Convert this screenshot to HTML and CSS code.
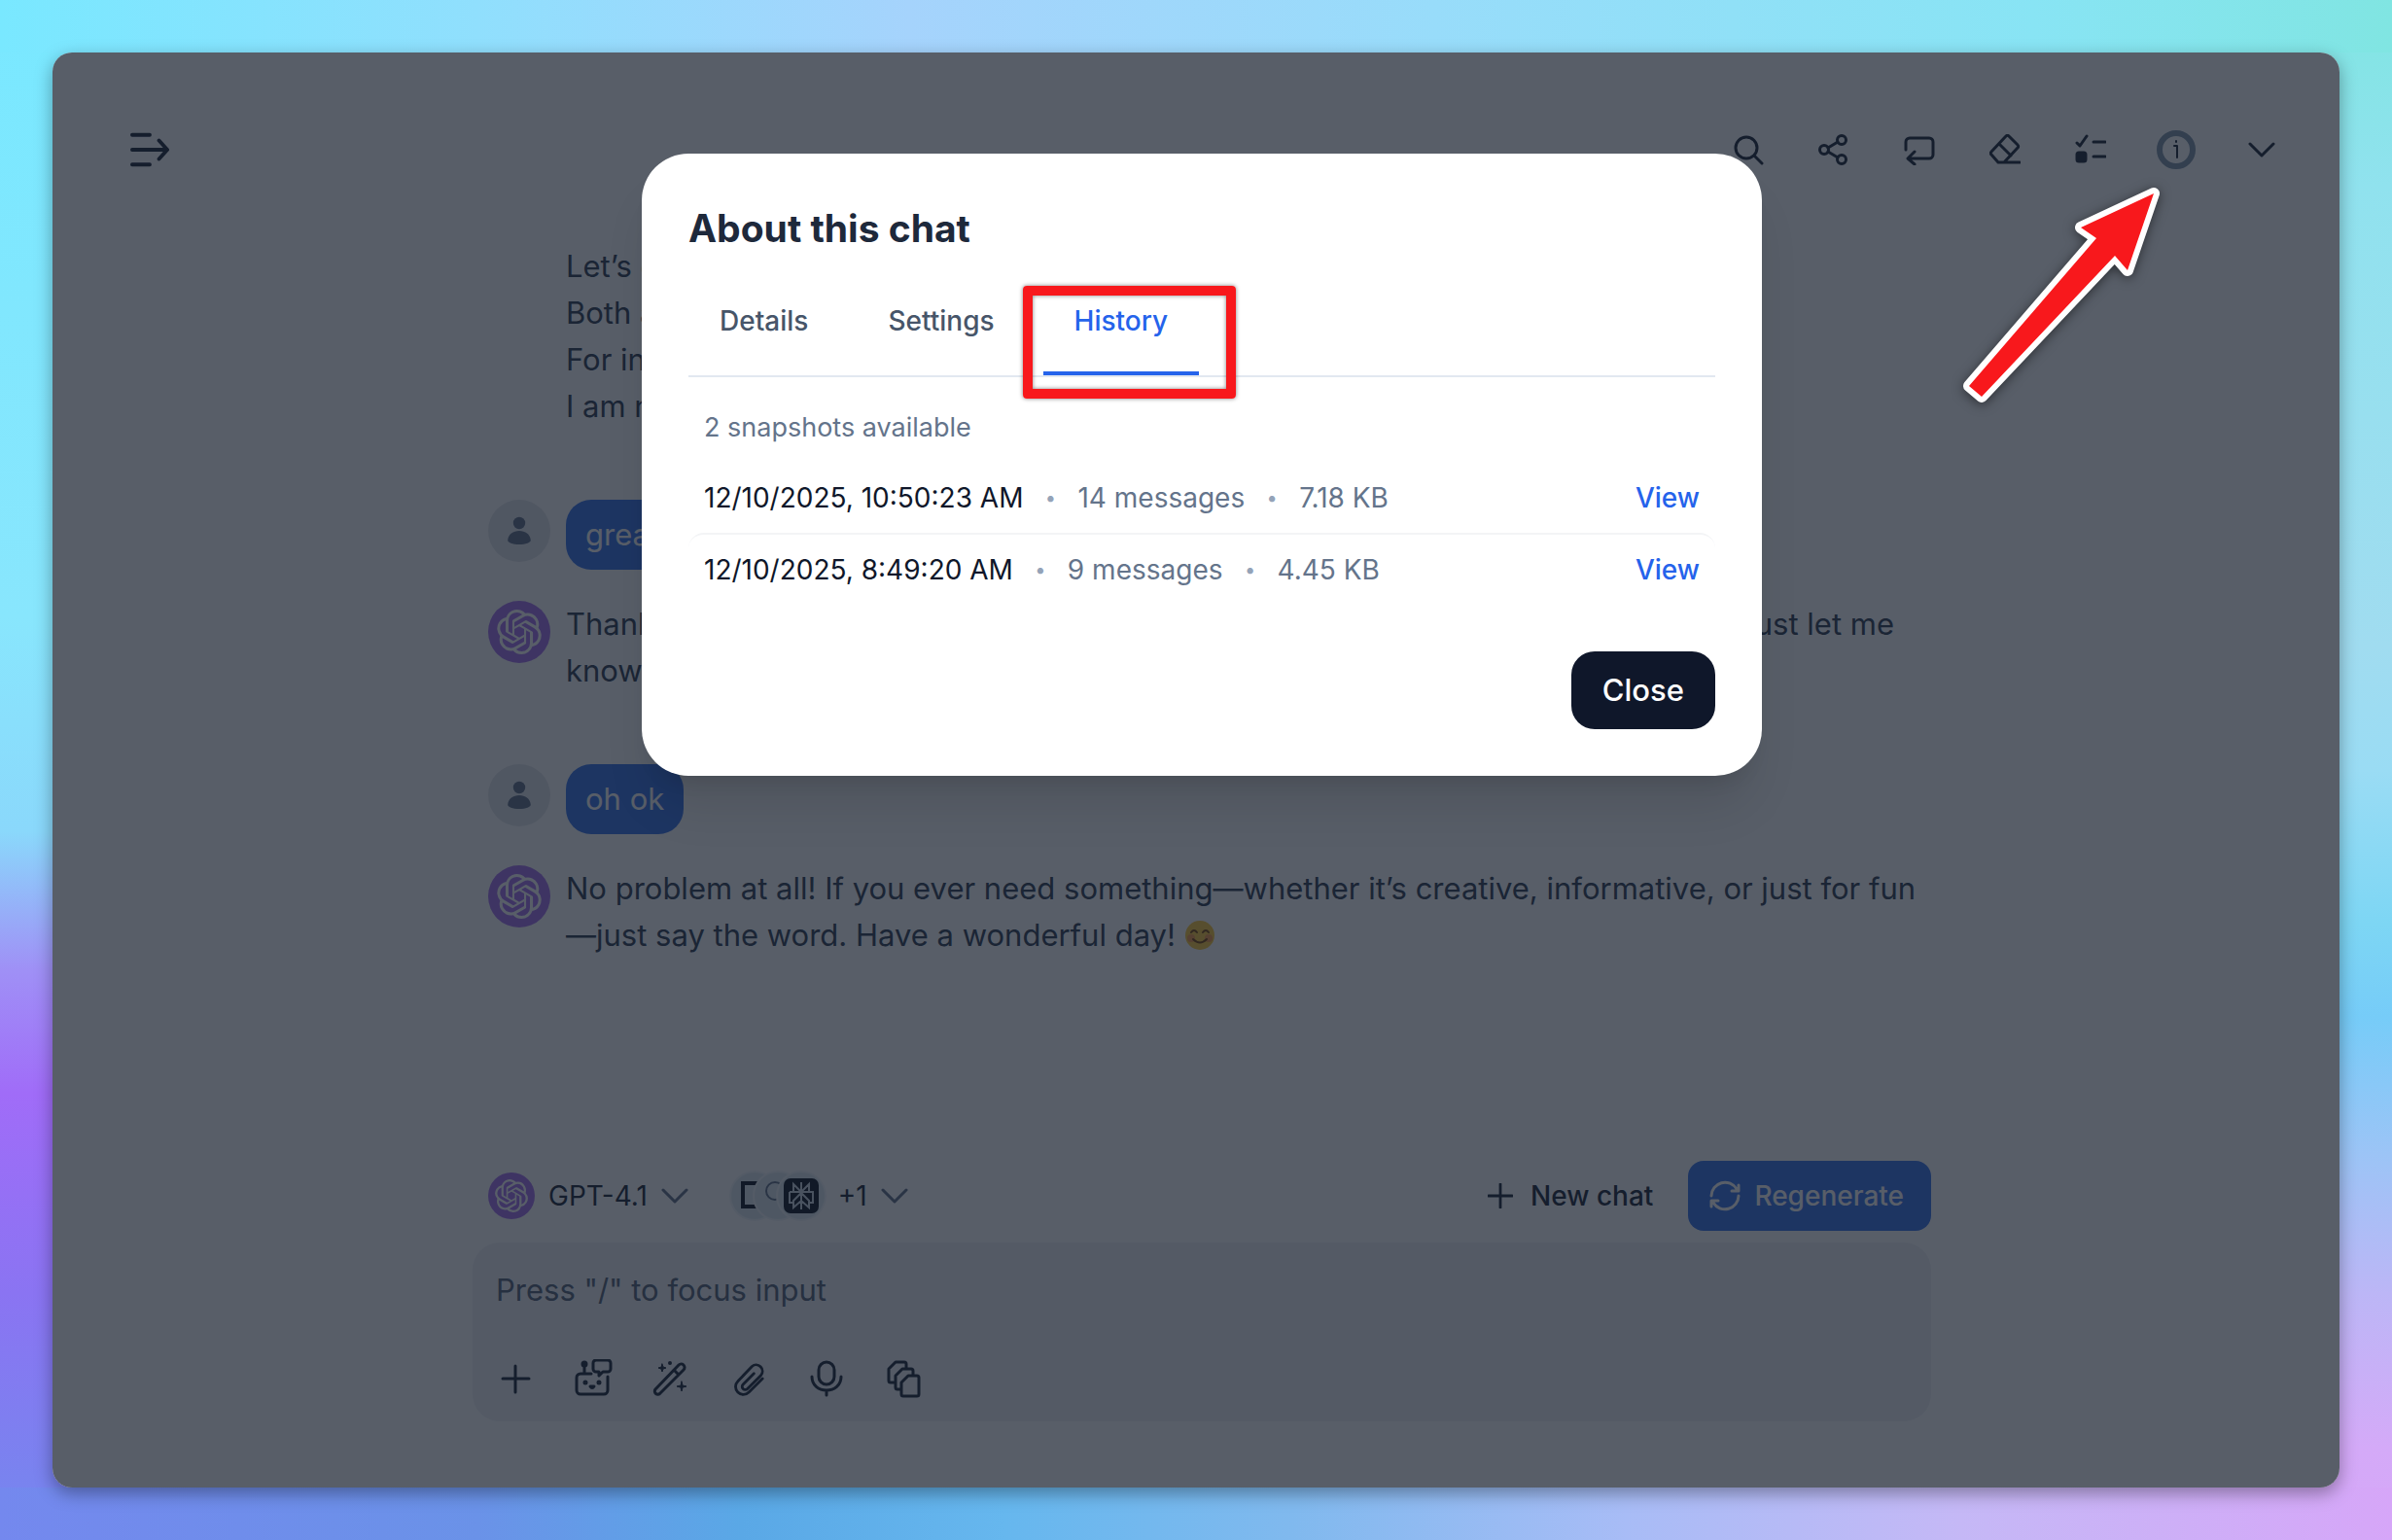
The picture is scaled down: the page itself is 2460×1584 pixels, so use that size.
FILE: index.html
```
<!DOCTYPE html>
<html lang="en">

<head>
    <meta charset="UTF-8">
    <meta name="viewport" content="width=device-width, initial-scale=1.0">
    <link rel="stylesheet" href="styles.css">
    <title>About this chat</title>
</head>

<body>

    <!-- shared icon shapes -->
    <svg class="sprite" aria-hidden="true">
        <symbol id="openai" viewBox="0 0 24 24">
            <path d="M22.2819 9.8211a5.9847 5.9847 0 0 0-.5157-4.9108 6.0462 6.0462 0 0 0-6.5098-2.9A6.0651 6.0651 0 0 0 4.9807 4.1818a5.9847 5.9847 0 0 0-3.9977 2.9 6.0462 6.0462 0 0 0 .7427 7.0966 5.98 5.98 0 0 0 .511 4.9107 6.051 6.051 0 0 0 6.5146 2.9001A5.9847 5.9847 0 0 0 13.2599 24a6.0557 6.0557 0 0 0 5.7718-4.2058 5.9894 5.9894 0 0 0 3.9977-2.9001 6.0557 6.0557 0 0 0-.7475-7.0729zm-9.022 12.6081a4.4755 4.4755 0 0 1-2.8764-1.0408l.1419-.0804 4.7783-2.7582a.7948.7948 0 0 0 .3927-.6813v-6.7369l2.02 1.1686a.071.071 0 0 1 .038.052v5.5826a4.504 4.504 0 0 1-4.4945 4.4944zm-9.6607-4.1254a4.4708 4.4708 0 0 1-.5346-3.0137l.142.0852 4.783 2.7582a.7712.7712 0 0 0 .7806 0l5.8428-3.3685v2.3324a.0804.0804 0 0 1-.0332.0615L9.74 19.9502a4.4992 4.4992 0 0 1-6.1408-1.6464zM2.3408 7.8956a4.485 4.485 0 0 1 2.3655-1.9728V11.6a.7664.7664 0 0 0 .3879.6765l5.8144 3.3543-2.0201 1.1685a.0757.0757 0 0 1-.071 0l-4.8303-2.7865A4.504 4.504 0 0 1 2.3408 7.872zm16.5963 3.8558L13.1038 8.364 15.1192 7.2a.0757.0757 0 0 1 .071 0l4.8303 2.7913a4.4944 4.4944 0 0 1-.6765 8.1042v-5.6772a.79.79 0 0 0-.407-.667zm2.0107-3.0231l-.142-.0852-4.7735-2.7818a.7759.7759 0 0 0-.7854 0L9.409 9.2297V6.8974a.0662.0662 0 0 1 .0284-.0615l4.8303-2.7866a4.4992 4.4992 0 0 1 6.6802 4.66zM8.3065 12.863l-2.02-1.1638a.0804.0804 0 0 1-.038-.0567V6.0742a4.4992 4.4992 0 0 1 7.3757-3.4537l-.142.0805L8.704 5.459a.7948.7948 0 0 0-.3927.6813zm1.0976-2.3654l2.602-1.4998 2.6069 1.4998v2.9994l-2.5974 1.4997-2.6067-1.4997Z"/>
        </symbol>
        <symbol id="user" viewBox="0 0 32 32">
            <circle cx="16" cy="8" r="6.2"/>
            <path d="M4.200 25.500c.6-6 5.600-9.500 11.800-9.500s11.200 3.500 11.800 9.500c.2 2.500-5 4.500-11.800 4.500s-12-2-11.800-4.500z"/>
        </symbol>
        <symbol id="chevron" viewBox="0 0 28 16">
            <path d="M2 2l12 12L26 2"/>
        </symbol>
        <symbol id="plus" viewBox="0 0 28 28">
            <path d="M14 1v26M1 14h26"/>
        </symbol>
    </svg>

    <div class="window">
        <header class="topbar">
            <button class="icon-btn menu-btn" aria-label="Show sidebar">
                <svg class="icon menu" viewBox="0 0 42 36"><path d="M2 2h19M2 18h37M2 34h19M31 8l9 10-9 10"/></svg>
            </button>
            <nav class="tools">
                <button class="icon-btn" aria-label="Search">
                    <svg class="icon" viewBox="0 0 32 32"><circle cx="14" cy="14" r="11"/><path d="M22 22l8 8"/></svg>
                </button>
                <button class="icon-btn" aria-label="Share">
                    <svg class="icon" viewBox="0 0 32 32"><circle cx="6" cy="16" r="4.500"/><circle cx="24" cy="6" r="4.500"/><circle cx="24" cy="26" r="4.500"/><path d="M10 14l10-6M10 18l10 6"/></svg>
                </button>
                <button class="icon-btn" aria-label="Resend">
                    <svg class="icon" viewBox="0 0 32 32"><path d="M2 16V8a4 4 0 0 1 4-4h20a4 4 0 0 1 4 4v13a4 4 0 0 1-4 4H5M11 18l-7 7 7 6"/></svg>
                </button>
                <button class="icon-btn" aria-label="Clear">
                    <svg class="icon" viewBox="0 0 32 32"><path d="M9 29l-7-8a2 2 0 0 1 0-3L17 2a2 2 0 0 1 3 0l9 9a2 2 0 0 1 0 3L15 29zM10 10l12 12M9 29h22"/></svg>
                </button>
                <button class="icon-btn" aria-label="Select messages">
                    <svg class="icon" viewBox="0 0 32 32"><path d="M2 9l3 3 7-10M19 8h12M19 23h12"/><rect class="fill" x="2" y="19" width="9" height="9" rx="2"/></svg>
                </button>
                <button class="icon-btn" aria-label="Chat info">
                    <svg class="icon info" viewBox="0 0 40 40"><circle class="ring" cx="20" cy="20" r="17"/><path d="M18 16h3v12M20 11v1"/></svg>
                </button>
                <button class="icon-btn" aria-label="More">
                    <svg class="icon chev"><use href="#chevron"/></svg>
                </button>
            </nav>
        </header>

        <main class="chat">
            <div class="message continued">
                <p class="text">Let’s go<br>Both are<br>For info<br>I am not</p>
            </div>
            <div class="message user">
                <span class="avatar"><svg><use href="#user"/></svg></span>
                <p class="bubble">great</p>
            </div>
            <div class="message bot">
                <span class="avatar ai"><svg><use href="#openai"/></svg></span>
                <p class="text"><span class="split"><span>Thank you!</span><span>just let me</span></span>know—</p>
            </div>
            <div class="message user">
                <span class="avatar"><svg><use href="#user"/></svg></span>
                <p class="bubble">oh ok</p>
            </div>
            <div class="message bot">
                <span class="avatar ai"><svg><use href="#openai"/></svg></span>
                <p class="text">No problem at all! If you ever need something—whether it’s creative, informative, or just for fun<br>—just say the word. Have a wonderful day!
                    <svg class="smile" viewBox="0 0 32 32" role="img" aria-label="Smiling face">
                        <circle class="face" cx="16" cy="16" r="15"/>
                        <circle class="cheek" cx="7" cy="19" r="4"/><circle class="cheek" cx="25" cy="19" r="4"/>
                        <path d="M7 13q3-4 6 0M19 13q3-4 6 0M9 20q7 7 14 0"/>
                    </svg></p>
            </div>
        </main>

        <footer class="composer">
            <div class="actions">
                <button class="model">
                    <span class="avatar ai small"><svg><use href="#openai"/></svg></span>
                    GPT-4.1
                    <svg class="icon chev light"><use href="#chevron"/></svg>
                </button>
                <button class="plugins">
                    <span class="stack">
                        <span class="chip"><svg viewBox="0 0 48 48"><path class="frame" d="M12 11h24v24H12z"/></svg></span>
                        <span class="chip"><svg viewBox="0 0 48 48"><circle class="loop" cx="21" cy="19" r="9"/></svg></span>
                        <span class="chip"><svg viewBox="0 0 48 48"><rect class="tile" x="6" y="6" width="36" height="36" rx="7"/><path class="lines" d="M24 10v28M24 20l-8-8v8M24 20l8-8v8M12 20h24v11h-4M12 20v11h4M24 21l-8 8v7l8-7 8 7v-7z"/></svg></span>
                    </span>
                    +1
                    <svg class="icon chev light"><use href="#chevron"/></svg>
                </button>
                <button class="new-chat"><svg class="icon plus"><use href="#plus"/></svg>New chat</button>
                <button class="regenerate">
                    <svg class="icon" viewBox="0 0 32 32"><path d="M2 16A14 14 0 0 1 28 9M30 16A14 14 0 0 1 4 23M30 5v6h-7M2 27v-6h7"/></svg>
                    Regenerate
                </button>
            </div>
            <div class="box">
                <input class="prompt" type="text" aria-label="Message" placeholder='Press "/" to focus input'>
                <div class="attach">
                    <button class="icon-btn" aria-label="Add"><svg class="icon big" viewBox="0 0 40 40"><path d="M20 7v27M7 20h27"/></svg></button>
                    <button class="icon-btn" aria-label="Agents"><svg class="icon big" viewBox="0 0 40 40"><path d="M18 15H7a4 4 0 0 0-4 4v13a4 4 0 0 0 4 4h24a4 4 0 0 0 4-4V18M11 15V6M23 1h12a3 3 0 0 1 3 3v6a3 3 0 0 1-3 3h-5l-4 4v-4h-3a3 3 0 0 1-3-3V4a3 3 0 0 1 3-3z"/><circle class="fill" cx="11" cy="5" r="2"/><circle class="fill" cx="12" cy="24" r="1"/><circle class="fill" cx="26" cy="24" r="1"/><path d="M17 28q2 3 4 0z"/></svg></button>
                    <button class="icon-btn" aria-label="Prompts"><svg class="icon big" viewBox="0 0 40 40"><path d="M4 31L28 6a3 3 0 0 1 5 5L9 35a3 3 0 0 1-5-4zM23 11l5 5"/><path class="fill thin" d="M11 5l1 3 3 1-3 1-1 3-1-3-3-1 3-1zM31 23l1 4 4 1-4 1-1 4-1-4-4-1 4-1z"/><circle class="dot" cx="19" cy="4" r="2"/></svg></button>
                    <button class="icon-btn" aria-label="Attach file"><svg class="icon big clip" viewBox="0 0 24 24"><path d="M20.500 12l-8.400 8.400a4.800 4.800 0 0 1-6.800 0a4.800 4.800 0 0 1 0-6.800L14 4.500a3.900 3.900 0 0 1 5.500 5.500l-8.300 8.300a1.900 1.900 0 0 1-2.700-2.700l6.700-6.700"/></svg></button>
                    <button class="icon-btn" aria-label="Voice"><svg class="icon big" viewBox="0 0 40 40"><rect x="12" y="3" width="16" height="23" rx="8"/><path d="M5 18c0 9 7 14 15 14s15-5 15-14M20 32v5"/></svg></button>
                    <button class="icon-btn" aria-label="Pages"><svg class="icon big" viewBox="0 0 40 40"><path d="M10 24H6a2 2 0 0 1-2-2V10l7-7h9a2 2 0 0 1 2 2v4M17 31h-4a2 2 0 0 1-2-2V17l7-7h9a2 2 0 0 1 2 2v4M24 17h9a2 2 0 0 1 2 2v17a2 2 0 0 1-2 2H19a2 2 0 0 1-2-2V24z"/></svg></button>
                </div>
            </div>
        </footer>

        <div class="overlay"></div>
    </div>

    <section class="modal" role="dialog" aria-labelledby="title">
        <h2 id="title">About this chat</h2>
        <div class="tabs" role="tablist">
            <button class="tab" role="tab">Details</button>
            <button class="tab" role="tab">Settings</button>
            <button class="tab active" role="tab">History<span class="marker"></span></button>
        </div>
        <p class="count">2 snapshots available</p>
        <ul class="snapshots">
            <li>
                <span class="date">12/10/2025, 10:50:23 AM</span><span class="sep">•</span>
                <span>14 messages</span><span class="sep">•</span>
                <span>7.18 KB</span>
                <a href="#">View</a>
            </li>
            <li>
                <span class="date">12/10/2025, 8:49:20 AM</span><span class="sep">•</span>
                <span>9 messages</span><span class="sep">•</span>
                <span>4.45 KB</span>
                <a href="#">View</a>
            </li>
        </ul>
        <button class="close">Close</button>
    </section>

    <svg class="arrow" viewBox="0 0 220 240">
        <path d="M201 15L126 50l16 11L11 213l13 11L161 79l13 15z"/>
    </svg>

</body>

</html>
```
FILE: styles.css
```
* {
    box-sizing: border-box;
}

body {
    position: relative;
    margin: 0;
    min-height: 100vh;
    padding: 54px;
    display: flex;
    font-family: Inter, "Liberation Sans", sans-serif;
    color: #1e293b;
    background-color: #8fdcf8;
    /* one gradient for each side of the window */
    background-image:
        linear-gradient(to right, #79e8ff, #90dffd 20%, #a5d3fc 38%, #98dcfa 60%, #88e4f4 85%, #80e5e2),
        linear-gradient(to right, #7488ee, #6a92e8 20%, #5aa8e6 31%, #66b7ee 42%, #80b9ee 54%, #a8bcf6 68%, #c5b8f6 82%, #d6a6f8),
        linear-gradient(to bottom, #79e8ff, #88e6fd 40%, #8ad8fb 54%, #9f90f6 63%, #a06cf8 71%, #8a74f2 84%, #7488ee),
        linear-gradient(to bottom, #80e5e2, #90e2ee 12%, #a0dcf0 42%, #9adcf4 50%, #7dd6f4 60%, #76ccf8 66%, #9cc4f6 75%, #bcb6f6 84%, #d4aaf8 94%, #d6a6f8);
    background-position: top, bottom, left, right;
    background-size: 100% 54px, 100% 54px, 80px 100%, 80px 100%;
    background-repeat: no-repeat;
}

p,
h2,
ul {
    margin: 0;
    padding: 0;
}

button {
    font: inherit;
    color: inherit;
    background: none;
    border: none;
    padding: 0;
    cursor: pointer;
}

.sprite {
    position: absolute;
    width: 0;
    height: 0;
}

.window {
    position: relative;
    flex: 1;
    display: flex;
    flex-direction: column;
    padding: 60px 54px 68px 66px;
    border-radius: 20px;
    overflow: hidden;
    background-color: #fff;
    box-shadow: 0 6px 18px rgba(0, 0, 0, 0.35);
}

.overlay {
    position: absolute;
    inset: 0;
    background-color: rgba(17, 26, 40, 0.7);
}

/* icons */

.icon {
    display: block;
    width: 32px;
    height: 32px;
    fill: none;
    stroke: currentColor;
    stroke-width: 3;
    stroke-linecap: round;
    stroke-linejoin: round;
}

.icon .fill,
.icon .dot {
    fill: currentColor;
}

.icon .thin {
    stroke-width: 1;
}

.icon .dot {
    stroke: none;
}

.icon.menu {
    width: 42px;
    height: 36px;
    stroke-width: 4;
}

.icon.big {
    width: 40px;
    height: 40px;
}

.icon.clip {
    stroke-width: 1.7;
}

.icon.chev {
    width: 28px;
    height: 16px;
}

.icon.light {
    color: #64748b;
}

.icon.plus {
    width: 26px;
    height: 26px;
}

.icon.info {
    width: 40px;
    height: 40px;
    stroke-width: 2;
}

.icon .ring {
    stroke: #8296aa;
    stroke-width: 6;
}

.icon-btn {
    width: 40px;
    height: 40px;
    display: flex;
    align-items: center;
    justify-content: center;
}

/* top bar */

.topbar {
    display: flex;
    align-items: center;
    justify-content: space-between;
    height: 80px;
    padding: 0 6px 0 14px;
}

.tools {
    display: flex;
    gap: 48px;
}

/* messages */

.chat {
    flex: 1;
    width: 100%;
    max-width: 1500px;
    margin: 0 auto;
    padding: 56px 0 0 16px;
    font-size: 31px;
    line-height: 48px;
    color: #334155;
}

.message {
    display: grid;
    grid-template-columns: 64px 1fr;
    column-gap: 16px;
}

.message.continued,
.message.bot {
    margin-bottom: 72px;
}

.message.user {
    margin-bottom: 32px;
}

.message .text {
    grid-column: 2;
}

.avatar {
    width: 64px;
    height: 64px;
    display: flex;
    align-items: center;
    justify-content: center;
    border-radius: 50%;
    background-color: #e5e7eb;
}

.avatar svg {
    width: 32px;
    height: 32px;
    fill: #64748b;
}

.avatar.ai {
    background-color: #a874ee;
}

.avatar.ai svg {
    width: 46px;
    height: 46px;
    fill: #fff;
}

.avatar.small {
    width: 48px;
    height: 48px;
}

.avatar.small svg {
    width: 34px;
    height: 34px;
}

.bubble {
    justify-self: start;
    padding: 12px 20px;
    border-radius: 26px;
    color: #fff;
    background-color: #3b76ec;
}

.split {
    display: flex;
    justify-content: space-between;
    padding-right: 38px;
}

.smile {
    width: 32px;
    height: 32px;
    vertical-align: -5px;
    fill: none;
    stroke: #7c4a12;
    stroke-width: 2;
    stroke-linecap: round;
}

.smile .face {
    fill: #fbc83c;
    stroke: none;
}

.smile .cheek {
    fill: #f59a4a;
    stroke: none;
}

/* composer */

.composer {
    width: 100%;
    max-width: 1500px;
    margin: 0 auto;
}

.actions {
    display: flex;
    align-items: center;
    padding: 0 0 12px 16px;
    font-size: 28px;
    line-height: 40px;
}

.actions button {
    display: flex;
    align-items: center;
    gap: 14px;
}

.actions .plugins {
    margin-left: 44px;
}

.actions .new-chat {
    margin-left: auto;
    margin-right: 36px;
    gap: 18px;
    font-weight: 500;
}

.actions .regenerate {
    height: 72px;
    padding: 0 28px 0 22px;
    border-radius: 16px;
    font-weight: 500;
    color: #fff;
    background-color: #3b76ec;
}

.stack {
    display: flex;
}

.chip {
    width: 48px;
    height: 48px;
    margin-left: -24px;
    border-radius: 50%;
    background-color: #dde8ee;
    box-shadow: 0 0 0 2px #f1f5f9;
}

.chip:first-child {
    margin-left: 0;
}

.chip svg {
    display: block;
    fill: none;
    stroke: #64748b;
    stroke-width: 2;
}

.chip .frame {
    stroke: #111827;
    stroke-width: 4;
}

.chip .tile {
    fill: #111827;
    stroke: none;
}

.chip .lines {
    stroke: #cbd5e1;
    stroke-width: 2;
}

.box {
    padding: 24px;
    border-radius: 28px;
    background-color: #f1f2f6;
}

.prompt {
    display: block;
    width: 100%;
    height: 48px;
    margin-bottom: 48px;
    padding: 0;
    border: none;
    outline: none;
    background: none;
    font: inherit;
    font-size: 31px;
}

.prompt::placeholder {
    color: #586579;
    opacity: 1;
}

.attach {
    display: flex;
    gap: 40px;
}

/* dialog, centred over the window */

.modal {
    position: absolute;
    top: 158px;
    left: 50%;
    width: 1152px;
    margin-left: -570px;
    padding: 48px;
    border-radius: 48px;
    display: flex;
    flex-direction: column;
    background-color: #fff;
    box-shadow: 0 40px 50px -10px rgba(0, 0, 0, 0.1), 0 16px 20px -12px rgba(0, 0, 0, 0.1);
}

.modal h2 {
    font-size: 39px;
    line-height: 58px;
    font-weight: 700;
}

.tabs {
    display: flex;
    gap: 18px;
    height: 124px;
    border-bottom: 2px solid #e2e8f0;
    font-size: 28px;
    line-height: 40px;
    font-weight: 500;
    color: #475569;
}

.tab {
    position: relative;
    padding: 14px 32px 0;
    border-bottom: 4px solid transparent;
}

.tab.active {
    color: #2563eb;
    border-color: #2563eb;
}

/* red box round the open tab */
.marker {
    position: absolute;
    inset: 30px -38px -28px -21px;
    border: 10px solid #f8181c;
    border-radius: 4px;
    box-shadow: 0 0 4px rgba(0, 0, 0, 0.5), inset 0 0 4px rgba(0, 0, 0, 0.5);
}

.count {
    padding: 32px 16px 16px;
    font-size: 27px;
    line-height: 40px;
    color: #64748b;
}

.snapshots {
    list-style: none;
    font-size: 28px;
    line-height: 40px;
    color: #64748b;
}

.snapshots li {
    display: flex;
    padding: 16px;
    border-radius: 16px;
}

.snapshots li + li {
    border-top: 2px solid #f3f4f6;
}

.snapshots .date {
    color: #0f172a;
}

.sep {
    width: 56px;
    text-align: center;
    font-size: 20px;
    color: #94a3b8;
}

.snapshots a {
    margin-left: auto;
    font-weight: 500;
    color: #2563eb;
    text-decoration: none;
}

.modal .close {
    align-self: flex-end;
    margin-top: 48px;
    padding: 16px 32px;
    border-radius: 24px;
    font-size: 31px;
    line-height: 48px;
    font-weight: 500;
    color: #fff;
    background-color: #0f172a;
}

/* red pointer to the info button */
.arrow {
    position: absolute;
    top: 184px;
    right: 226px;
    width: 220px;
    height: 240px;
    fill: #f8181c;
    stroke: #fff;
    stroke-width: 12;
    stroke-linejoin: round;
    paint-order: stroke;
    filter: drop-shadow(0 2px 6px rgba(0, 0, 0, 0.5));
}
```
